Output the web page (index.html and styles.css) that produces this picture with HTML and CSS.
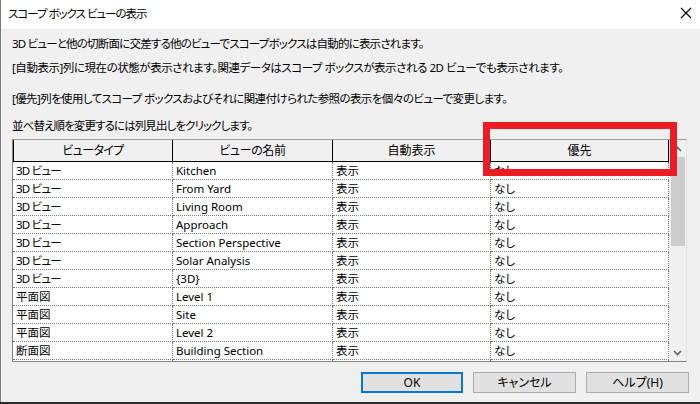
FILE: index.html
```html
<!DOCTYPE html>
<html lang="ja">
<head>
<meta charset="utf-8">
<link rel="stylesheet" href="styles.css">
</head>
<body>
<div class="window">
  <div class="titlebar">
    <span class="title">スコープ ボックス ビューの表示</span>
    <span class="close">
      <svg width="12" height="12" viewBox="0 0 12 12"><path d="M1 1 L11 11 M11 1 L1 11" stroke="#000" stroke-width="1.1" fill="none"/></svg>
    </span>
  </div>
  <div class="body">
    <p class="line l1">3D ビューと他の切断面に交差する他のビューでスコープボックスは自動的に表示されます。</p>
    <p class="line l2">[自動表示]列に現在の状態が表示されます。関連データはスコープ ボックスが表示される 2D ビューでも表示されます。</p>
    <p class="line l3">[優先]列を使用してスコープ ボックスおよびそれに関連付けられた参照の表示を個々のビューで変更します。</p>
    <p class="line l4">並べ替え順を変更するには列見出しをクリックします。</p>
    <div class="grid">
      <div class="rows">
        <div class="row head">
          <div class="c c1">ビュータイプ</div>
          <div class="c c2">ビューの名前</div>
          <div class="c c3">自動表示</div>
          <div class="c c4">優先</div>
        </div>
        <div class="row"><div class="c c1"><span class="kn">3D ビュー</span></div><div class="c c2">Kitchen</div><div class="c c3">表示</div><div class="c c4">なし</div></div>
        <div class="row"><div class="c c1"><span class="kn">3D ビュー</span></div><div class="c c2">From Yard</div><div class="c c3">表示</div><div class="c c4">なし</div></div>
        <div class="row"><div class="c c1"><span class="kn">3D ビュー</span></div><div class="c c2">Living Room</div><div class="c c3">表示</div><div class="c c4">なし</div></div>
        <div class="row"><div class="c c1"><span class="kn">3D ビュー</span></div><div class="c c2">Approach</div><div class="c c3">表示</div><div class="c c4">なし</div></div>
        <div class="row"><div class="c c1"><span class="kn">3D ビュー</span></div><div class="c c2">Section Perspective</div><div class="c c3">表示</div><div class="c c4">なし</div></div>
        <div class="row"><div class="c c1"><span class="kn">3D ビュー</span></div><div class="c c2">Solar Analysis</div><div class="c c3">表示</div><div class="c c4">なし</div></div>
        <div class="row"><div class="c c1"><span class="kn">3D ビュー</span></div><div class="c c2">{3D}</div><div class="c c3">表示</div><div class="c c4">なし</div></div>
        <div class="row"><div class="c c1">平面図</div><div class="c c2">Level 1</div><div class="c c3">表示</div><div class="c c4">なし</div></div>
        <div class="row"><div class="c c1">平面図</div><div class="c c2">Site</div><div class="c c3">表示</div><div class="c c4">なし</div></div>
        <div class="row"><div class="c c1">平面図</div><div class="c c2">Level 2</div><div class="c c3">表示</div><div class="c c4">なし</div></div>
        <div class="row"><div class="c c1">断面図</div><div class="c c2">Building Section</div><div class="c c3">表示</div><div class="c c4">なし</div></div>
        <div class="row"><div class="c c1"></div><div class="c c2"></div><div class="c c3"></div><div class="c c4"></div></div>
      </div>
      <div class="scrollbar">
        <span class="arrow">
          <svg width="9" height="6" viewBox="0 0 9 6"><path d="M1 5 L4.5 1.5 L8 5" stroke="#606060" stroke-width="1.6" fill="none"/></svg>
        </span>
        <span class="thumb"></span>
        <span class="track"></span>
        <span class="arrow">
          <svg width="9" height="6" viewBox="0 0 9 6"><path d="M1 1 L4.5 4.5 L8 1" stroke="#606060" stroke-width="1.6" fill="none"/></svg>
        </span>
      </div>
    </div>
    <div class="buttons">
      <button class="btn default">OK</button>
      <button class="btn">キャンセル</button>
      <button class="btn">ヘルプ(H)</button>
    </div>
  </div>
  <div class="highlight"></div>
</div>
</body>
</html>
```
FILE: styles.css
```css
* { box-sizing: border-box; }
html, body {
  margin: 0;
  padding: 0;
}
body {
  width: 700px;
  height: 404px;
  overflow: hidden;
  background: #2b2b2b;
  font-family: "Noto Sans", "Noto Sans CJK JP", sans-serif;
  font-size: 12px;
  color: #000;
  font-feature-settings: "palt";
}
.window {
  position: relative;
  width: 700px;
  height: 402px;
  background: #f0f0f0;
  border-left: 1px solid #7a7a7a;
  display: flex;
  flex-direction: column;
}
.titlebar {
  height: 29px;
  background: #fff;
  display: flex;
  align-items: center;
  justify-content: space-between;
  padding-left: 7px;
}
.title {
  font-size: 11.5px;
  letter-spacing: -1px;
  line-height: 16px;
  margin-top: -1px;
}
.close {
  width: 28px;
  height: 29px;
  display: flex;
  align-items: center;
  justify-content: center;
  margin-top: -3px;
}
.body {
  padding: 0 0 0 11px;
  display: flex;
  flex-direction: column;
}
.line {
  margin: 0;
  font-size: 11.5px;
  line-height: 16px;
  white-space: nowrap;
}
.l1 { margin-top: 7px; letter-spacing: -0.8px; }
.l2 { margin-top: 8px; letter-spacing: -0.45px; }
.l3 { margin-top: 15px; letter-spacing: -0.6px; }
.l4 { margin-top: 11px; letter-spacing: -0.9px; }
.grid {
  margin-top: 5px;
  width: 675px;
  height: 223px;
  border: 1px solid #828282;
  border-top: 1px solid #a0a0a0;
  border-right: 1px solid #e3e3e3;
  display: flex;
  background: #fff;
}
.rows {
  width: 656px;
  overflow: hidden;
  background: #fff;
}
.row {
  display: flex;
  height: 18px;
}
.row.head {
  height: 22px;
  background: #f0f0f0;
  border-bottom: 1px solid #000;
}
.c {
  height: 100%;
  padding-left: 3px;
  font-size: 11.5px;
  line-height: 17px;
  white-space: nowrap;
  overflow: hidden;
  border-right: 1px dotted #7a7a7a;
  border-bottom: 1px dotted #7a7a7a;
}
.kn { letter-spacing: -0.8px; }
.c1 { width: 160px; }
.c2 { width: 160px; }
.c3 { width: 158px; }
.c4 { width: 178px; }
.head .c {
  border-right: 1px solid #000;
  border-bottom: none;
  text-align: center;
  padding-left: 0;
  font-size: 12px;
  line-height: 21px;
}
.head .c1 { border-left: 1px solid #000; width: 160px; letter-spacing: -0.6px; }
.head .c2 { letter-spacing: -0.4px; }
.scrollbar {
  width: 17px;
  background: #f0f0f0;
  display: flex;
  flex-direction: column;
  align-items: center;
}
.arrow {
  height: 17px;
  width: 17px;
  display: flex;
  align-items: center;
  justify-content: center;
}
.thumb {
  width: 14px;
  height: 89px;
  background: #cdcdcd;
}
.track { flex: 1; }
.buttons {
  margin-top: 10px;
  display: flex;
  justify-content: flex-end;
  gap: 10px;
  padding-right: 11px;
}
.btn {
  width: 103px;
  height: 21px;
  padding: 0;
  background: #e1e1e1;
  border: 1px solid #adadad;
  font-family: "Noto Sans", "Noto Sans CJK JP", sans-serif;
  font-feature-settings: "palt";
  font-size: 12px;
  line-height: 18px;
  color: #000;
}
.btn.default {
  border: 2px solid #0078d7;
  width: 102px;
}
.highlight {
  position: absolute;
  left: 482px;
  top: 122px;
  width: 194px;
  height: 54px;
  border: 7px solid #ed1c24;
}
```
